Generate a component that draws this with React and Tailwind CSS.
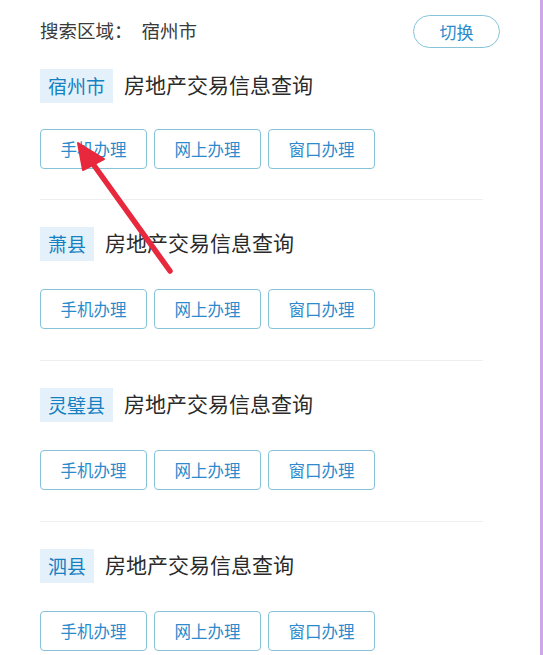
import React from 'react';

const regions = ['宿州市', '萧县', '灵璧县', '泗县'];
const actions = ['手机办理', '网上办理', '窗口办理'];

const Section = ({ name, first, last }) => {
  return (
    <div
      className={`${first ? 'pt-[21px]' : 'pt-[27px]'} ${
        last ? '' : first ? 'pb-[30px] border-b border-[#eeeeee] w-[443px]' : 'pb-[31px] border-b border-[#eeeeee] w-[443px]'
      }`}
    >
      <div className="flex items-center">
        <span className="h-[34px] px-[8px] pb-[2px] flex items-center bg-[#e4f1fb] text-[#1580c2] text-[19px] leading-none">
          {name}
        </span>
        <span className="ml-[11px] pb-[3px] text-[21px] text-[#2a2a2a] leading-none">房地产交易信息查询</span>
      </div>
      <div className={`flex gap-[7px] ${first ? 'mt-[26px]' : 'mt-[28px]'}`}>
        {actions.map((a) => (
          <button
            key={a}
            className="w-[107px] h-[40px] border border-[#86c3d8] rounded-[4px] text-[16.5px] text-[#2b8bcc] bg-white"
          >
            {a}
          </button>
        ))}
      </div>
    </div>
  );
};

export default function App() {
  return (
    <div
      className="relative w-[543px] h-[655px] bg-white overflow-hidden"
      style={{ fontFamily: '"Noto Sans CJK SC", "Noto Sans", sans-serif' }}
    >
      {/* right edge strip */}
      <div className="absolute top-0 right-0 w-[3px] h-full bg-[#cfa6e8]" />

      <div className="pl-[40px] pr-[43px] pt-[15px]">
        {/* search header */}
        <div className="flex items-center justify-between h-[33px]">
          <div className="text-[18.5px] text-[#3a3a3a] leading-none pb-[3px]">
            搜索区域：<span className="ml-[9px]">宿州市</span>
          </div>
          <button className="w-[87px] h-[33px] rounded-full border border-[#86c3d8] text-[17px] text-[#2b8bcc]">
            切换
          </button>
        </div>

        {regions.map((r, i) => (
          <Section key={r} name={r} first={i === 0} last={i === regions.length - 1} />
        ))}
      </div>

      {/* red annotation arrow */}
      <svg className="absolute left-0 top-0 pointer-events-none" width="543" height="655">
        <line x1="170" y1="271" x2="88" y2="157" stroke="#e8283c" strokeWidth="5.5" strokeLinecap="round" />
        <polygon points="78,143 83,170 104,159" fill="#e8283c" stroke="#e8283c" strokeWidth="2" strokeLinejoin="round" />
      </svg>
    </div>
  );
}
